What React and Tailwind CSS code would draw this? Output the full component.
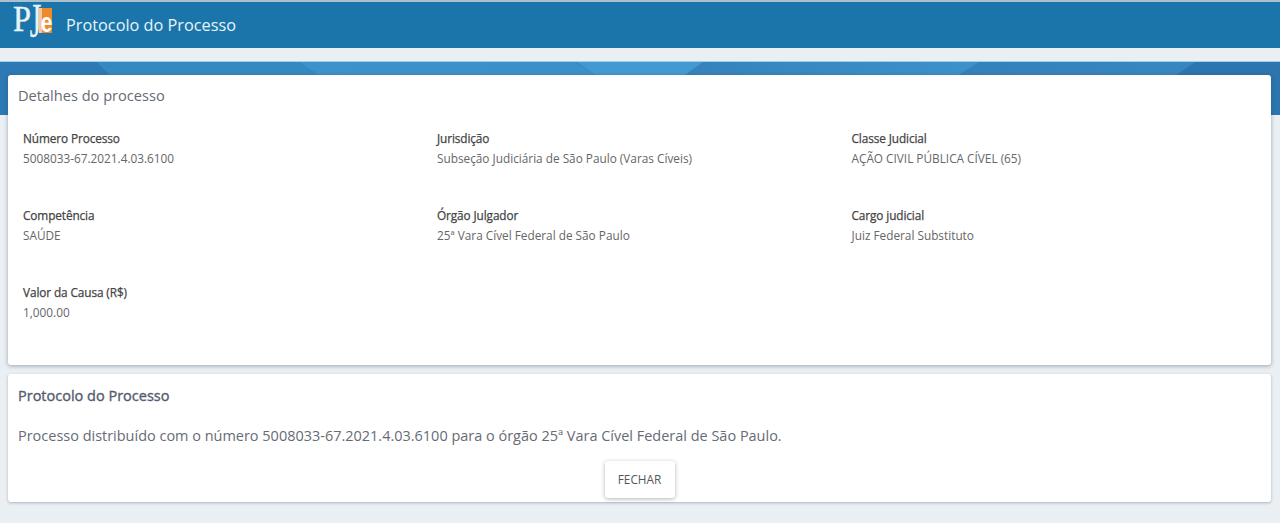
function Logo() {
  return (
    <div className="relative w-[40px] h-[36px]">
      <span className="absolute left-[-4px] top-[-8px] w-[24px] text-center origin-center scale-x-[0.9] text-[36px] leading-[40px] text-[#e8f3f7] font-['Liberation_Serif',serif] [-webkit-text-stroke:0.4px_#e8f3f7]">P</span>
      <span className="absolute left-[13px] top-[-14px] w-[14px] text-center origin-center scale-x-[0.62] text-[48px] leading-[56px] text-[#e8f3f7] font-['Liberation_Serif',serif] [-webkit-text-stroke:0.4px_#e8f3f7]">J</span>
      <div className="absolute left-[25px] top-[1px] w-[13px] h-[25px] bg-[#ef8a2c]">
        <div className="absolute left-0 top-0 w-[3px] h-full bg-[#f5c9a0]" />
        <span className="absolute left-0 top-[6px] w-full text-center origin-center scale-x-[0.75] text-[28px] leading-[18px] font-bold text-white font-['Liberation_Sans',sans-serif]">e</span>
      </div>
    </div>
  );
}

function Field({ label, value }) {
  return (
    <div className="h-[77px]">
      <div className="text-[11.8px] leading-[16px] text-[#444] tracking-[-0.1px] [-webkit-text-stroke:0.25px_#444]">{label}</div>
      <div className="mt-[4px] text-[11.8px] leading-[16px] text-[#666]">{value}</div>
    </div>
  );
}

export default function App() {
  return (
    <div className="relative h-[523px] overflow-hidden bg-[#e9eff2] font-['Open_Sans',sans-serif]">
      <div className="h-[2px] bg-[#a9c0cf]" />
      <header className="h-[46px] bg-[#1b75ab] flex items-center pl-[14px]">
        <Logo />
        <span className="ml-[12px] text-[16.3px] text-[#e8f4f9]">Protocolo do Processo</span>
      </header>
      <div className="relative mt-[13px] h-[54px] overflow-hidden bg-[#3589c1] border-t border-[#9fd0ec]">
        <svg className="absolute inset-0 w-full h-full" viewBox="0 0 1280 54" preserveAspectRatio="none">
          <defs>
            <linearGradient id="a" x1="0" x2="1" y1="0" y2="0">
              <stop offset="0" stopColor="#3d92cb" />
              <stop offset="1" stopColor="#3a8dc6" />
            </linearGradient>
            <linearGradient id="b" x1="0" x2="1" y1="0" y2="0">
              <stop offset="0" stopColor="#3582bb" />
              <stop offset="1" stopColor="#3d92cb" />
            </linearGradient>
            <linearGradient id="c" x1="0" x2="1" y1="0" y2="0">
              <stop offset="0" stopColor="#3380b9" />
              <stop offset="1" stopColor="#3887c0" />
            </linearGradient>
          </defs>
          <polygon points="0,0 97,0 147,54 0,54" fill="#2c79b3" />
          <polygon points="300,0 574,0 597,14 684,14 703,0 979,0 957,14 900,54 360,54 320,14" fill="url(#a)" />
          <polygon points="577,0 703,0 684,14 597,14" fill="#439ad2" />
          <polygon points="703,0 979,0 957,14 684,14" fill="url(#b)" />
          <polygon points="979,0 1195,0 1175,14 1100,54 900,54 957,14" fill="url(#c)" />
          <polygon points="1195,0 1280,0 1280,54 1100,54 1175,14" fill="#2c75ae" />
        </svg>
      </div>
      <main className="absolute left-[8px] right-[9px] top-[75px] flex flex-col gap-[9px]">
        <section className="h-[290px] rounded-[3px] bg-white shadow-[0_1px_4px_rgba(60,70,100,0.45)] px-[10px] pt-[10px]">
          <h2 className="text-[14.6px] leading-[20px] text-[#666a75]">Detalhes do processo</h2>
          <div className="mt-[25px] ml-[5px] grid grid-cols-[414px_414.5px_1fr]">
            <Field label="Número Processo" value="5008033-67.2021.4.03.6100" />
            <Field label="Jurisdição" value="Subseção Judiciária de São Paulo (Varas Cíveis)" />
            <Field label="Classe Judicial" value="AÇÃO CIVIL PÚBLICA CÍVEL (65)" />
            <Field label="Competência" value="SAÚDE" />
            <Field label="Órgão Julgador" value="25ª Vara Cível Federal de São Paulo" />
            <Field label="Cargo judicial" value="Juiz Federal Substituto" />
            <Field label="Valor da Causa (R$)" value="1,000.00" />
          </div>
        </section>
        <section className="h-[128px] rounded-[3px] bg-white shadow-[0_1px_3px_rgba(60,70,100,0.35)] px-[10px] pt-[12px]">
          <h2 className="text-[14.5px] leading-[20px] text-[#565b70] [-webkit-text-stroke:0.35px_#565b70]">Protocolo do Processo</h2>
          <p className="mt-[20px] text-[14.47px] leading-[20px] text-[#666b75]">
            Processo distribuído com o número 5008033-67.2021.4.03.6100 para o órgão 25ª Vara Cível Federal de São Paulo.
          </p>
          <div className="mt-[15px] flex justify-center">
            <button className="w-[70px] h-[37px] rounded-[3px] bg-white text-[11.8px] text-[#555] shadow-[0_1px_4px_rgba(0,0,0,0.3)]">FECHAR</button>
          </div>
        </section>
      </main>
    </div>
  );
}
